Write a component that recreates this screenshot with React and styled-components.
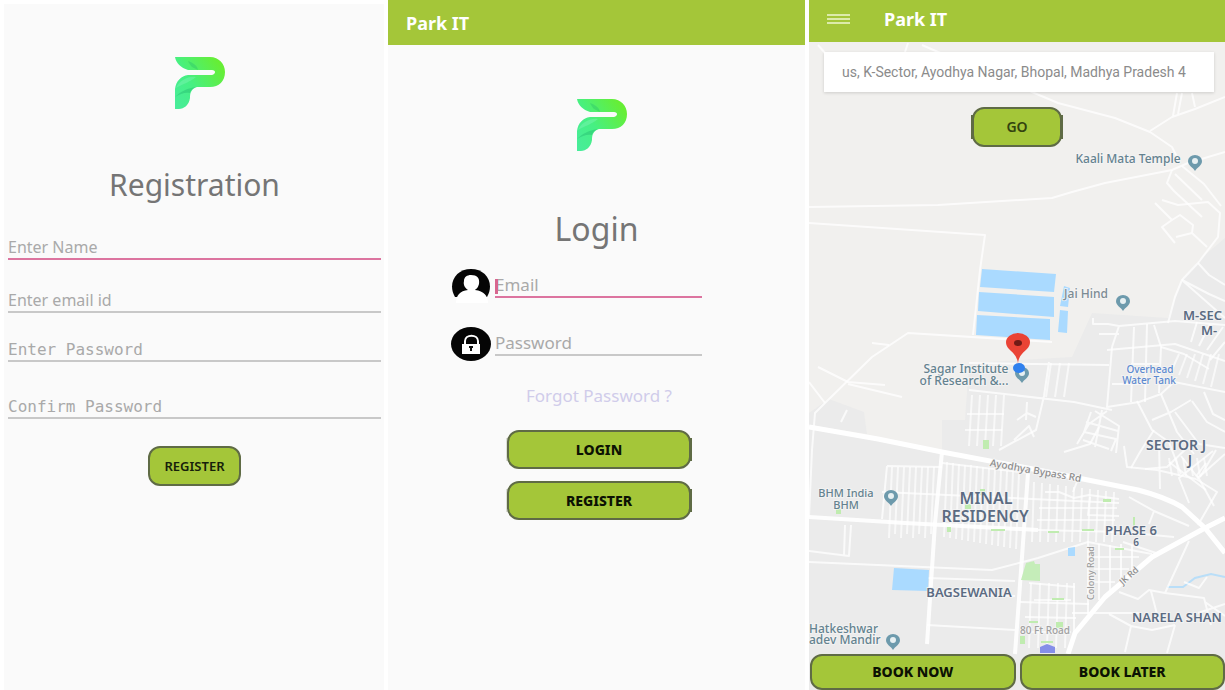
import React from "react";
import styled, { createGlobalStyle, css } from "styled-components";

const GlobalStyle = createGlobalStyle`
  * { box-sizing: border-box; }
  body {
    margin: 0;
    background: #ffffff;
    font-family: "Noto Sans", "Open Sans", sans-serif;
  }
  button, input { font: inherit; }
`;

const lime = "#a4c639";
const pink = "#dc749f";
const edge = "#5f6b45";

const Screens = styled.main`
  display: grid;
  grid-template-columns: 380fr 417fr 416fr;
  gap: 4px;
  min-height: 100vh;
  padding-left: 4px;
`;

const Screen = styled.section`
  display: flex;
  flex-direction: column;
  min-width: 0;
  background: #fafafa;
`;

const RegistrationScreen = styled(Screen)`
  align-items: center;
  margin-top: 4px;
  padding: 52px 3px 0 4px;
`;

const AppBar = styled.header`
  display: flex;
  align-items: center;
  flex: none;
  gap: 34px;
  height: ${(p) => p.$height}px;
  padding: 0 18px ${(p) => p.$lift || 0}px;
  background: ${lime};
  color: #ffffff;
`;

const AppName = styled.span`
  font-size: 18px;
  line-height: 24px;
  font-weight: 700;
`;

const MenuButton = styled.button`
  display: flex;
  padding: 0;
  border: 0;
  background: none;
  color: #dcebaa;
`;

const LogoArt = styled.svg`
  display: block;
  flex: none;
  width: 64px;
  height: 54px;
`;

const Title = styled.h1`
  margin: ${(p) => p.$top}px 0 0;
  font-size: ${(p) => p.$size}px;
  line-height: 40px;
  font-weight: 400;
  color: #757575;
`;

const RegisterForm = styled.form`
  display: flex;
  flex-direction: column;
  align-items: center;
  width: 100%;
  margin-top: 30px;
`;

const Field = styled.input`
  width: 100%;
  min-width: 0;
  height: ${(p) => p.$height || 25}px;
  margin-bottom: ${(p) => p.$space || 0}px;
  padding: ${(p) => p.$inset || 1}px 0 0;
  border: 0;
  border-bottom: 2px solid ${(p) => (p.$active ? pink : "#c8c8c8")};
  border-radius: 0;
  outline: 0;
  background: transparent;
  font-size: ${(p) => p.$size || 16}px;
  line-height: 20px;
  ${(p) =>
    p.$mono &&
    css`
      font-family: "DejaVu Sans Mono", "Liberation Mono", monospace;
    `}
  &::placeholder {
    color: #a9a9a9;
    opacity: 1;
  }
`;

const ActionButton = styled.button`
  position: relative;
  width: ${(p) => p.$width || "auto"};
  height: ${(p) => p.$height || 40}px;
  padding: 0;
  border: 2px solid ${edge};
  border-radius: 12px;
  background: ${lime};
  color: ${(p) => p.$ink || "#16200a"};
  font-size: ${(p) => p.$size || 14}px;
  line-height: 20px;
  font-weight: ${(p) => p.$weight || 700};
  ${(p) =>
    p.$edges &&
    css`
      &::before,
      &::after {
        content: "";
        position: absolute;
        top: 6px;
        bottom: 6px;
        width: 2px;
        background: ${edge};
      }
      &::before { left: -3px; opacity: ${p.$edges === "both" ? 1 : 0.2}; }
      &::after { right: -3px; }
    `}
`;

const LoginBody = styled.div`
  display: flex;
  flex-direction: column;
  align-items: center;
  padding-top: 53px;
`;

const LoginForm = styled.form`
  width: 100%;
  margin-top: 20px;
`;

const Credentials = styled.div`
  display: flex;
  flex-direction: column;
  gap: 24px;
  padding: 0 103px 0 63px;
`;

const CredentialRow = styled.label`
  display: flex;
  align-items: flex-start;
  gap: 4px;
`;

const BadgeArt = styled.svg`
  display: block;
  flex: none;
  width: 40px;
  height: 34px;
`;

const Entry = styled.span`
  position: relative;
  flex: 1;
  display: flex;
  min-width: 0;
`;

const Caret = styled.span`
  position: absolute;
  left: 0;
  top: 10px;
  width: 3px;
  height: 15px;
  background: #d8668f;
`;

const LoginActions = styled.div`
  display: flex;
  flex-direction: column;
  gap: 12px;
  margin-top: 23px;
  padding: 0 114px 0 119px;
`;

const ForgotLink = styled.a`
  align-self: center;
  margin-bottom: 10px;
  font-size: 17px;
  line-height: 24px;
  white-space: nowrap;
  color: #d0ccea;
  text-decoration: none;
`;

const MapArea = styled.div`
  position: relative;
  flex: 1;
  display: flex;
  flex-direction: column;
  align-items: center;
  min-height: 540px;
  overflow: hidden;
`;

const MapArt = styled.svg`
  position: absolute;
  inset: 0;
  width: 100%;
  height: 100%;
`;

const SearchCard = styled.div`
  position: relative;
  align-self: stretch;
  height: 40px;
  margin: 10px 11px 15px 15px;
  padding: 0 18px;
  background: #ffffff;
  box-shadow: 0 1px 3px rgba(0, 0, 0, 0.15);
`;

const SearchInput = styled.input`
  width: 100%;
  height: 40px;
  padding: 0;
  border: 0;
  outline: 0;
  background: transparent;
  font-family: Roboto, sans-serif;
  font-size: 14px;
  line-height: 20px;
  color: #8b8b8b;
`;

const BookingBar = styled.div`
  position: relative;
  align-self: stretch;
  display: grid;
  grid-template-columns: 1fr 1fr;
  gap: 4px;
  margin-top: auto;
  padding: 0 0 0 1px;
`;

function Logo({ id }) {
  return (
    <LogoArt viewBox="0 0 64 54" role="img" aria-label="Park IT logo">
      <defs>
        <linearGradient id={id} x1="0" y1="1" x2="1" y2="0.3">
          <stop offset="0" stopColor="#48ec9c" />
          <stop offset="0.45" stopColor="#46f083" />
          <stop offset="1" stopColor="#66ee35" />
        </linearGradient>
      </defs>
      <path
        fill={`url(#${id})`}
        d="M12 1H47C56 1 62 8 62 16C62 25 56 31 47 31H34C28 33 27 37 27 42C26 49 21 53 16 53H12V33C13 25 18 20 25 19H49C53 18 53 14 49 14H25C18 12 13 7 12 1Z"
      />
      <path fill="#2fc56a" opacity=".45" d="M25 5C30 7 34 9 35 14L29 11C27 9 26 7 25 5Z" />
      <path fill="#25bd72" opacity=".45" d="M12 41C18 35 25 32 33 31C29 33 27 35 27 37C22 36 17 38 12 41Z" />
      <path fill="#84f5b8" opacity=".4" d="M13 32C17 24 25 20 33 21C27 26 20 28 13 32Z" />
    </LogoArt>
  );
}

function UserBadge() {
  return (
    <BadgeArt viewBox="0 0 40 34" aria-hidden="true">
      <path d="M4 28C-4 14 5 0 20 0S44 14 36 28Z" fill="#050505" />
      <path d="M20 6C26 6 29 9 28 15C27 19 25 20 24 21C33 22 37 27 37 34H5C5 26 9 22 17 21C14 19 12 16 13 12C13 8 16 6 20 6Z" fill="#fff" />
    </BadgeArt>
  );
}

function LockBadge() {
  return (
    <BadgeArt viewBox="0 0 40 34" aria-hidden="true">
      <ellipse cx="20" cy="17" rx="20" ry="17" fill="#050505" />
      <path d="M14 18V14C14 7 27 7 27 14V18" fill="none" stroke="#fff" strokeWidth="2" />
      <rect x="11" y="17" width="18" height="10" fill="#fff" />
      <path d="M20 19V24M18 20H22" stroke="#111" strokeWidth="2" />
    </BadgeArt>
  );
}

const range = (from, to, step) => {
  const out = [];
  for (let v = from; v <= to; v += step) out.push(v);
  return out;
};

const mainRoads = [
  "M0 385L69 397L133 410L229 428L329 448Q356 455 373 465L396 486L416 511",
  "M416 476L396 486L343 515L296 555L266 591L259 612",
];

const avenues = [
  "M0 475L96 481L229 488",
  "M133 410L126 481L118 602",
  "M219 431L213 515L206 612",
];

const roads = [
  "M113 3L129 10L180 30L223 50L249 61L306 76L341 90L363 105L371 121",
  "M9 3L16 11M96 10L99 1",
  "M368 51L364 74M373 51L369 72M383 51L386 65",
  "M416 55L386 67L363 75L341 89",
  "M416 110L379 121L363 128L296 141L263 150L243 156L129 163L0 165",
  "M363 128L358 141L365 149L393 175M373 124L395 142L412 164M366 132L393 158",
  "M353 158L369 163L399 160L411 171L409 195L389 221L373 238L366 255L359 281",
  "M346 161L363 178L353 185L366 201M363 178L371 173L384 183L383 191L367 195M383 191L398 205",
  "M0 181L176 193L171 228L164 293",
  "M243 300L99 291L63 315L16 361L6 371L3 408L0 475",
  "M0 340L16 361M9 325L39 340L76 343M39 342L93 355M63 301L80 303M32 380L38 368",
  "M0 520L183 528L229 516L279 500L343 512",
  "M229 488L313 490L365 495",
  "M160 348L265 360L303 368M160 321L300 323M240 320L235 354L227 388L190 408",
  "M389 221L400 233L416 243M373 238L400 252L416 259M374 239L416 276",
  "M284 276L284 282H299L310 284L366 279L416 283M310 284L303 305M290 292L310 292M298 308L366 302L416 319",
  "M303 305L298 365L330 360L352 352L365 340L416 350M345 283L352 305L350 351",
  "M352 305L375 312L400 327M388 280L382 300M401 282L390 304M414 285L398 308M416 300L401 318",
  "M325 285L322 360M338 282L336 360M303 342L340 342M322 322L350 322",
  "M328 359L343 388L360 400L372 432M343 378L362 370L382 358M352 352L368 390L385 412M366 370L390 402L416 406M383 359L398 380L416 390",
  "M395 350L404 372L416 378M345 388L331 410L322 426M380 404L358 425L336 427",
  "M298 369L280 382L268 402M282 370L275 390L307 397L302 409M286 369L310 384L307 411M293 368L286 405M277 380L309 389M274 398L300 407",
  "M208 378L218 371L227 375M205 398L220 384L225 395M218 360L217 378",
  "M236 450H250L265 456L280 453L310 457M264 450L269 437L281 438M281 455L279 473L310 474",
  "M118 536L206 539M118 551L206 554M118 583L206 588",
  "M0 509L40 514L42 483M36 483L35 514",
  "M78 424L73 477M78 424L133 425M73 450L310 461M133 421L220 431",
  "M220 541L266 545M211 560L280 562M216 575L267 576M263 571L330 571",
  "M279 500V572M290 502V558M301 503V550M312 502V541M323 503V530M265 541V590",
  "M380 499L356 551L395 556L402 583M310 550L329 557L340 548L356 551M342 549L350 580M300 572L322 584L343 588L366 583M322 584L316 610M366 583L358 611M389 571L416 562M396 560L416 574M375 540L390 546L398 535",
  "M255 410L281 402L290 385M315 404L318 425L348 428L387 437M350 400L351 447M397 421L388 433L405 464M407 408L391 435",
  "M387 437L408 450L389 483M404 409L370 436L380 461M360 420L397 448M372 414L389 436L416 412",
  "M320 455L345 469L380 484M345 469L340 482M314 500L350 512L330 525",
];

const blocks = [
  ...range(83, 128, 6).map((x) => `M${x} 425L${x - 3} ${490 + (x % 4) * 2}`),
  ...range(138, 214, 6).map((x) => `M${x} ${420 + Math.round((x - 138) / 7)}L${x - 3} ${495 + Math.round((x - 138) / 6)}`),
  ...range(225, 310, 8).map((x) => `M${x} ${440 + Math.round((x - 225) / 8)}L${x - 2} 500`),
  ...range(163, 195, 8).map((x) => `M${x} 353L${x - 3} 404`),
  ...range(222, 262, 9).map((x) => `M${x} 541L${x - 2} 606`),
  ...range(360, 396, 7).map((x) => `M${x} 416L${x + 3} 434`),
  ...range(242, 262, 9).map((x) => `M${x} 321L${x - 5} 355`),
  ...range(370, 412, 8).map((y, i) => `M${y} 312L${y - 8} ${330 + i * 3}`),
  "M158 372H195M156 388H193M225 558H262M218 590H262M230 466H308M228 478H306",
  "M285 515H330M285 527H320M285 540H306",
];

const greens = [
  [174, 398, 6, 9], [171, 447, 5, 6], [156, 462, 6, 5], [27, 467, 5, 5], [138, 485, 4, 5],
  [182, 487, 14, 2], [239, 489, 11, 2], [273, 487, 12, 2], [294, 457, 8, 3], [324, 475, 2, 9],
  [243, 556, 12, 2], [247, 580, 7, 6], [220, 579, 9, 2], [211, 594, 5, 8], [232, 599, 12, 2], [306, 506, 9, 2],
];

const pois = [
  [386, 119], [314, 259], [213, 331], [82, 454], [84, 598],
];

const MapGroup = styled.g`
  fill: none;
  stroke: #ffffff;
  stroke-linejoin: round;
  stroke-width: ${(p) => p.$width}px;
  stroke-opacity: ${(p) => p.$opacity || 1};
`;

const MapLabel = styled.text`
  font-size: ${(p) => p.$size || 11}px;
  font-weight: ${(p) => p.$weight || 500};
  fill: ${(p) => p.$color || "#64828f"};
  text-anchor: ${(p) => p.$anchor || "middle"};
  paint-order: stroke;
  stroke: rgba(245, 245, 245, 0.8);
  stroke-width: 2px;
`;

const AreaLabel = styled(MapLabel)`
  font-weight: 600;
  fill: #5b6b82;
`;

function CityMap() {
  return (
    <MapArt viewBox="0 0 416 648" preserveAspectRatio="xMidYMid slice" role="img" aria-label="Map around Sagar Institute of Research">
      <rect width="416" height="648" fill="#f1f0ee" />
      <path d="M0 385L133 410L133 378H156L160 321L263 315L283 271L359 276L373 238L390 218L416 196V648H0Z" fill="#ebebeb" />
      <path d="M0 371L20 357L55 370L58 392L0 383Z" fill="#ebebeb" />
      <g fill="#aadaff">
        <path d="M173 227L247 232L245 250L171 245ZM170 250L245 255V275L169 269ZM168 273L241 277V298L167 293Z" />
        <path d="M255 244L261 246L259 265L251 264ZM251 268L259 269L258 291L249 290Z" />
      </g>
      <path d="M358 545L374 545L386 536L402 532L416 535" fill="none" stroke="#b9def8" strokeWidth="2" />
      <MapGroup $width={2} $opacity={0.65}>
        {blocks.map((d) => <path key={d} d={d} />)}
      </MapGroup>
      <MapGroup $width={2} $opacity={0.75}>
        {roads.map((d) => <path key={d} d={d} />)}
      </MapGroup>
      <MapGroup $width={4} $opacity={0.9}>
        {avenues.map((d) => <path key={d} d={d} />)}
      </MapGroup>
      <MapGroup $width={5}>
        {mainRoads.map((d) => <path key={d} d={d} />)}
      </MapGroup>
      <path d="M85 526L120 528L119 549L83 548ZM259 506L266 505V514H259Z" fill="#aadaff" />
      <path d="M217 521L225 519L226 522H231V539L212 538Z" fill="#c5edb9" />
      {greens.map(([x, y, w, h]) => (
        <rect key={`${x}-${y}`} x={x} y={y} width={w} height={h} fill="#c0ecb0" />
      ))}
      {pois.map(([x, y]) => (
        <g key={x}>
          <path d={`M${x - 7} ${y}A7 6 0 0 1 ${x + 7} ${y}C${x + 7} ${y + 5} ${x + 2} ${y + 6} ${x} ${y + 10}C${x - 2} ${y + 6} ${x - 7} ${y + 5} ${x - 7} ${y}Z`} fill="#6d9aac" />
          <circle cx={x} cy={y} r="3" fill="#e7f0f2" />
        </g>
      ))}
      <path d="M231 605L238 602L246 605V611H231Z" fill="#858ee8" />

      <MapLabel x="319" y="121" $size={12}>Kaali Mata Temple</MapLabel>
      <MapLabel x="277" y="256" $size={12} $color="#7c8b93">Jai Hind</MapLabel>
      <MapLabel x="157" y="331" $size={12}>Sagar Institute</MapLabel>
      <MapLabel x="155" y="343" $size={12}>of Research &amp;...</MapLabel>
      <MapLabel x="341" y="331" $size={10} $color="#5d8ad0">Overhead</MapLabel>
      <MapLabel x="340" y="342" $size={10} $color="#5d8ad0">Water Tank</MapLabel>
      <AreaLabel x="374" y="278" $size={13} $anchor="start">M-SEC</AreaLabel>
      <AreaLabel x="400" y="293" $size={13}>M-</AreaLabel>
      <AreaLabel x="367" y="408" $size={14}>SECTOR J</AreaLabel>
      <AreaLabel x="381" y="423" $size={14}>J</AreaLabel>
      <AreaLabel x="177" y="462" $size={16}>MINAL</AreaLabel>
      <AreaLabel x="176" y="480" $size={16}>RESIDENCY</AreaLabel>
      <AreaLabel x="322" y="493" $size={13}>PHASE 6</AreaLabel>
      <AreaLabel x="327" y="504" $size={10}>6</AreaLabel>
      <AreaLabel x="160" y="555" $size={13}>BAGSEWANIA</AreaLabel>
      <AreaLabel x="323" y="580" $size={13} $anchor="start">NARELA SHAN</AreaLabel>
      <MapLabel x="37" y="455">BHM India</MapLabel>
      <MapLabel x="37" y="467">BHM</MapLabel>
      <MapLabel x="0" y="591" $size={12} $anchor="start">Hatkeshwar</MapLabel>
      <MapLabel x="0" y="602" $size={12} $anchor="start">adev Mandir</MapLabel>
      <MapLabel transform="translate(226 432) rotate(10)" $size={10} $color="#8b8b8b">Ayodhya Bypass Rd</MapLabel>
      <MapLabel transform="translate(285 531) rotate(-90)" $size={9} $color="#9b9b9b">Colony Road</MapLabel>
      <MapLabel transform="translate(322 536) rotate(-42)" $size={9} $color="#8b8b8b">JK Rd</MapLabel>
      <MapLabel x="236" y="592" $size={10} $color="#a0a0a0">80 Ft Road</MapLabel>

      <ellipse cx="210" cy="326" rx="6" ry="5" fill="#2f80ee" />
      <path d="M209 322C208 309 197 309 197 300A12 9 0 0 1 221 300C221 309 210 309 209 322Z" fill="#ea4335" />
      <ellipse cx="209" cy="301" rx="4" ry="3" fill="#721b16" />
    </MapArt>
  );
}

export default function App() {
  return (
    <>
      <GlobalStyle />
      <Screens>
        <RegistrationScreen>
          <Logo id="logo-registration" />
          <Title $top={55} $size={30}>Registration</Title>
          <RegisterForm>
            <Field aria-label="Name" placeholder="Enter Name" $active $space={28} />
            <Field aria-label="Email id" type="email" placeholder="Enter email id" $space={24} />
            <Field aria-label="Password" type="password" placeholder="Enter Password" $mono $space={32} />
            <Field aria-label="Confirm password" type="password" placeholder="Confirm Password" $mono $space={27} />
            <ActionButton type="button" $width="93px" $size={13} $weight={600}>REGISTER</ActionButton>
          </RegisterForm>
        </RegistrationScreen>

        <Screen>
          <AppBar $height={45}>
            <AppName>Park IT</AppName>
          </AppBar>
          <LoginBody>
            <Logo id="logo-login" />
            <Title $top={57} $size={32}>Login</Title>
            <LoginForm>
              <Credentials>
                <CredentialRow>
                  <UserBadge />
                  <Entry>
                    <Field aria-label="Email" type="email" placeholder="Email" $active $height={29} $inset={4} $size={17} />
                    <Caret />
                  </Entry>
                </CredentialRow>
                <CredentialRow>
                  <LockBadge />
                  <Entry>
                    <Field aria-label="Password" type="password" placeholder="Password" $height={29} $inset={4} $size={17} />
                  </Entry>
                </CredentialRow>
              </Credentials>
              <LoginActions>
                <ForgotLink href="#forgot">Forgot Password ?</ForgotLink>
                <ActionButton type="button" $height={39} $edges="right" $weight={800} $ink="#0c1203">LOGIN</ActionButton>
                <ActionButton type="button" $height={39} $edges="right" $weight={800} $ink="#0c1203">REGISTER</ActionButton>
              </LoginActions>
            </LoginForm>
          </LoginBody>
        </Screen>

        <Screen>
          <AppBar $height={42} $lift={4}>
            <MenuButton type="button" aria-label="Menu">
              <svg width="23" height="14" viewBox="0 0 23 14" aria-hidden="true">
                <path d="M0 3H23M0 7H23M0 11H23" stroke="currentColor" strokeWidth="2" />
              </svg>
            </MenuButton>
            <AppName>Park IT</AppName>
          </AppBar>
          <MapArea>
            <CityMap />
            <SearchCard>
              <SearchInput
                aria-label="Parking location"
                defaultValue="us, K-Sector, Ayodhya Nagar, Bhopal, Madhya Pradesh 4"
              />
            </SearchCard>
            <ActionButton type="button" $width="90px" $edges="both" $weight={600} $ink="#33430f">GO</ActionButton>
            <BookingBar>
              <ActionButton type="button" $height={36} $weight={800} $ink="#0c1203">BOOK NOW</ActionButton>
              <ActionButton type="button" $height={36} $weight={800} $ink="#0c1203">BOOK LATER</ActionButton>
            </BookingBar>
          </MapArea>
        </Screen>
      </Screens>
    </>
  );
}
